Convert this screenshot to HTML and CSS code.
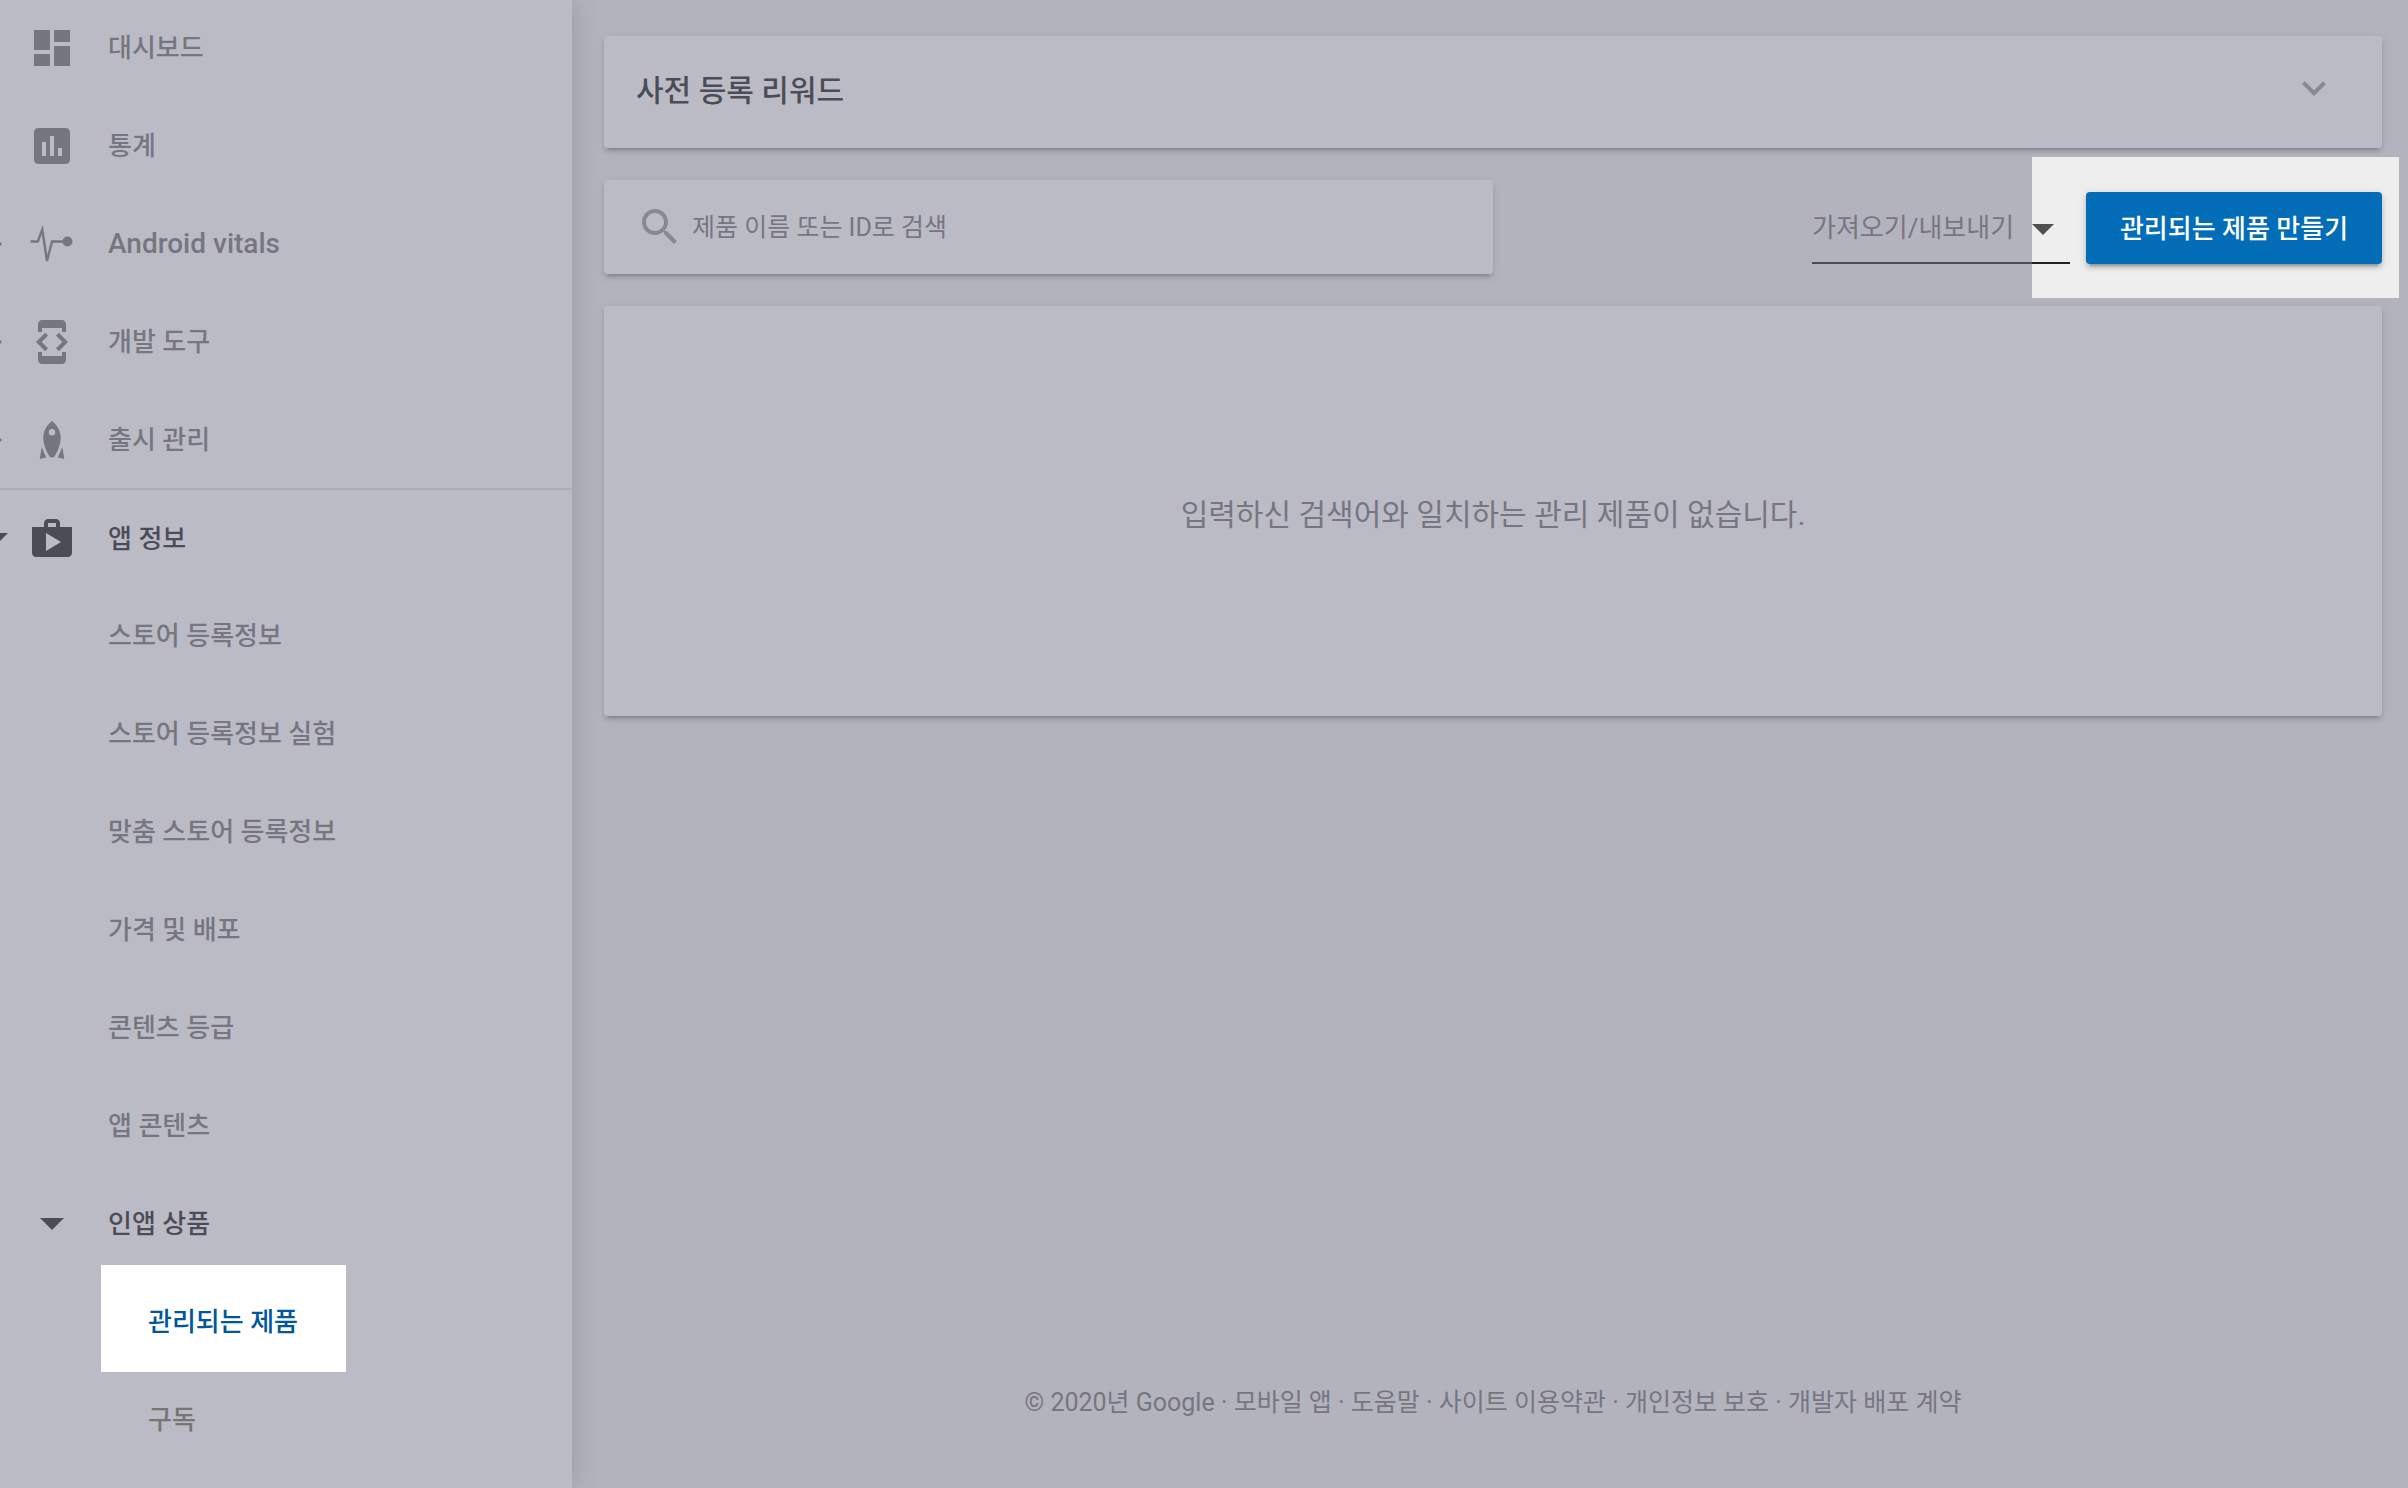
FILE: index.html
```html
<!DOCTYPE html>
<html lang="ko">
<head>
    <meta charset="UTF-8">
    <meta name="viewport" content="width=device-width, initial-scale=1.0">
    <title>관리되는 제품</title>
    <link rel="stylesheet" href="styles.css">
</head>
<body>
    <div class="layout">
        <aside class="sidebar">
            <nav class="menu">
                <a href="#" class="menu-item">
                    <span class="caret"></span>
                    <svg class="icon" viewBox="0 0 24 24"><path d="M3 13h8V3H3v10zm0 8h8v-6H3v6zm10 0h8V11h-8v10zm0-18v6h8V3h-8z"/></svg>
                    <span>대시보드</span>
                </a>
                <a href="#" class="menu-item">
                    <span class="caret"></span>
                    <svg class="icon" viewBox="0 0 24 24"><path d="M19 3H5c-1.1 0-2 .9-2 2v14c0 1.1.9 2 2 2h14c1.1 0 2-.9 2-2V5c0-1.1-.9-2-2-2zM9 17H7v-7h2v7zm4 0h-2V7h2v10zm4 0h-2v-4h2v4z"/></svg>
                    <span>통계</span>
                </a>
                <a href="#" class="menu-item">
                    <svg class="caret" viewBox="0 0 24 24"><path d="M6 0l12 12L6 24z"/></svg>
                    <svg class="icon" viewBox="0 0 48 48">
                        <path class="line" d="M2.5 21.5h7.3L14.3 9.5 19 41l5-19.5h12"/>
                        <circle cx="39.5" cy="21.5" r="5"/>
                    </svg>
                    <span class="latin">Android vitals</span>
                </a>
                <a href="#" class="menu-item">
                    <svg class="caret" viewBox="0 0 24 24"><path d="M6 0l12 12L6 24z"/></svg>
                    <svg class="icon" viewBox="0 0 24 24"><path d="M7 5h10v2h2V3c0-1.1-.9-1.99-2-1.99L7 1c-1.1 0-2 .9-2 2v4h2V5zm8.41 11.59L20 12l-4.59-4.59L14 8.83 17.17 12 14 15.17l1.41 1.42zM10 15.17L6.83 12 10 8.83 8.59 7.41 4 12l4.59 4.59L10 15.17zM17 19H7v-2H5v4c0 1.1.9 2 2 2h10c1.1 0 2-.9 2-2v-4h-2v2z"/></svg>
                    <span>개발 도구</span>
                </a>
                <a href="#" class="menu-item">
                    <svg class="caret" viewBox="0 0 24 24"><path d="M6 0l12 12L6 24z"/></svg>
                    <svg class="icon" viewBox="0 0 48 48">
                        <path fill-rule="evenodd" d="M24 5c5 4 8.700 9.500 8.700 16.500 0 7-3 14-6.200 19-1 1.300-4 1.300-5 0-3.200-5-6.200-12-6.200-19C15.300 14.500 19 9 24 5zm0 8.100a3.200 3.200 0 1 0 0 6.400 3.200 3.200 0 0 0 0-6.400z"/>
                        <path d="M13.700 31l4.500 10.500-6.500 1.500zM34.300 31l-4.500 10.500 6.500 1.500z"/>
                    </svg>
                    <span>출시 관리</span>
                </a>
                <a href="#" class="menu-item divided open">
                    <svg class="caret" viewBox="0 0 24 24"><path d="M0 6h24L12 18z"/></svg>
                    <svg class="icon" viewBox="0 0 24 24"><path d="M16 6V4c0-1.110-.89-2-2-2h-4c-1.110 0-2 .89-2 2v2H2v13c0 1.110.89 2 2 2h16c1.110 0 2-.89 2-2V6h-6zm-6-2h4v2h-4V4zM9 18V9l7.500 4.500L9 18z"/></svg>
                    <span>앱 정보</span>
                </a>
                <a href="#" class="menu-item sub">스토어 등록정보</a>
                <a href="#" class="menu-item sub">스토어 등록정보 실험</a>
                <a href="#" class="menu-item sub">맞춤 스토어 등록정보</a>
                <a href="#" class="menu-item sub">가격 및 배포</a>
                <a href="#" class="menu-item sub">콘텐츠 등급</a>
                <a href="#" class="menu-item sub">앱 콘텐츠</a>
                <a href="#" class="menu-item open">
                    <span class="caret"></span>
                    <svg class="icon" viewBox="0 0 48 48"><path d="M12 18h24L24 30z"/></svg>
                    <span>인앱 상품</span>
                </a>
                <a href="#" class="menu-item leaf selected">
                    관리되는 제품
                    <span class="spotlight spotlight-menu"></span>
                </a>
                <a href="#" class="menu-item leaf">구독</a>
            </nav>
        </aside>

        <main class="content">
            <button type="button" class="card rewards">
                <span>사전 등록 리워드</span>
                <svg class="icon" viewBox="0 0 24 24"><path d="M16.590 8.590L12 13.170 7.410 8.590 6 10l6 6 6-6z"/></svg>
            </button>

            <div class="toolbar">
                <label class="card search">
                    <svg class="icon" viewBox="0 0 24 24"><path d="M15.500 14h-.79l-.28-.27C15.410 12.590 16 11.110 16 9.500 16 5.910 13.090 3 9.500 3S3 5.910 3 9.500 5.910 16 9.500 16c1.610 0 3.090-.59 4.230-1.570l.27.28v.79l5 4.990L20.490 19l-4.990-5zm-6 0C7.010 14 5 11.990 5 9.500S7.010 5 9.500 5 14 7.010 14 9.500 11.990 14 9.500 14z"/></svg>
                    <input type="search" placeholder="제품 이름 또는 ID로 검색" aria-label="제품 이름 또는 ID로 검색">
                </label>
                <div class="actions">
                    <div class="dropdown">
                        <select aria-label="가져오기/내보내기">
                            <option>가져오기/내보내기</option>
                        </select>
                        <svg class="dropdown-arrow" viewBox="0 0 22 11"><path d="M0 0h22L11 11z"/></svg>
                    </div>
                    <div class="create">
                        <button type="button" class="btn">관리되는 제품 만들기</button>
                        <span class="spotlight spotlight-create"></span>
                    </div>
                </div>
            </div>

            <section class="card empty">
                <p>입력하신 검색어와 일치하는 관리 제품이 없습니다.</p>
            </section>

            <footer class="footer">
                © 2020년 Google · <a href="#">모바일 앱</a> · <a href="#">도움말</a> · <a href="#">사이트 이용약관</a> · <a href="#">개인정보 보호</a> · <a href="#">개발자 배포 계약</a>
            </footer>
        </main>
    </div>
</body>
</html>
```
FILE: styles.css
```css
* {
    box-sizing: border-box;
}

body {
    margin: 0;
    font-family: Roboto, "Noto Sans CJK KR", sans-serif;
    font-size: 26px;
    color: #757575;
    background: #eee;
}

a {
    color: inherit;
    text-decoration: none;
}

button, input, select {
    font: inherit;
    color: inherit;
}

.layout {
    display: flex;
    min-height: 100vh;
}

/* Sidebar */
.sidebar {
    position: relative;
    z-index: 1;
    flex: 0 0 572px;
    overflow: hidden;
    background: #fff;
    box-shadow: 0 0 24px rgba(60, 60, 80, 0.22);
}

/* the menu is scrolled a little to the left, which cuts the carets */
.menu {
    margin: -1px 0 0 -20px;
}

.menu-item {
    display: flex;
    align-items: center;
    height: 98px;
    font-weight: 500;
    line-height: 40px;
}

.menu-item.open {
    color: #212121;
}

.menu-item.divided {
    height: 99px;
    margin-top: -1px;
    border-top: 2px solid #e0e0e0;
}

.menu-item.sub {
    padding-left: 128px;
}

.menu-item.leaf {
    position: relative;
    padding-left: 168px;
}

.menu-item.selected {
    color: #01579b;
}

.latin {
    font-size: 28px;
}

.caret {
    width: 24px;
    height: 24px;
    margin: 0 20px 0 4px;
    fill: currentColor;
}

.icon {
    flex: none;
    width: 48px;
    height: 48px;
    fill: currentColor;
}

.menu-item .icon {
    margin-right: 32px;
}

.line {
    fill: none;
    stroke: currentColor;
    stroke-width: 2.4;
}

/* The shadow of a spotlight dims everything round it */
.spotlight {
    position: absolute;
    pointer-events: none;
    box-shadow: 0 0 0 3000px rgba(119, 119, 139, 0.5);
}

.spotlight-menu {
    top: -8px;
    bottom: -1px;
    left: 121px;
    width: 245px;
}

.spotlight-create {
    top: -35px;
    right: -17px;
    bottom: -34px;
    left: -54px;
}

/* Content */
.content {
    flex: 1;
    display: flex;
    flex-direction: column;
    gap: 32px;
    padding: 36px 26px 65px 32px;
    overflow: hidden;
}

.card, .btn {
    border: none;
    border-radius: 4px;
    box-shadow: 0 4px 4px rgba(0, 0, 0, 0.14), 0 6px 2px -4px rgba(0, 0, 0, 0.2), 0 2px 10px rgba(0, 0, 0, 0.12);
}

.card {
    background: #fff;
}

.rewards {
    display: flex;
    justify-content: space-between;
    align-items: center;
    height: 112px;
    padding: 0 44px 8px 32px;
    font-size: 30px;
    font-weight: 500;
    color: #212121;
    cursor: pointer;
}

.rewards .icon, .search .icon {
    fill: #999;
}

.toolbar {
    display: flex;
    justify-content: space-between;
    align-items: center;
}

.search {
    display: flex;
    align-items: center;
    gap: 8px;
    width: 50%;
    height: 94px;
    padding: 0 32px;
}

.search input {
    flex: 1;
    padding: 0;
    border: none;
    outline: none;
    background: none;
    font-size: 25px;
}

.search input::placeholder {
    color: #757575;
}

.actions {
    display: flex;
    gap: 16px;
    padding-top: 2px;
}

.dropdown {
    position: relative;
}

.dropdown select {
    width: 258px;
    height: 72px;
    padding: 2px 0 0;
    border: none;
    border-bottom: 2px solid #212121;
    border-radius: 0;
    background: none;
    appearance: none;
    cursor: pointer;
}

.dropdown-arrow {
    position: absolute;
    top: 32px;
    right: 16px;
    width: 22px;
    height: 11px;
    fill: #505050;
    pointer-events: none;
}

.create {
    position: relative;
}

.btn {
    min-width: 296px;
    height: 72px;
    padding: 0 32px 4px;
    background: #036db7;
    color: #fff;
    font-weight: 500;
    cursor: pointer;
}

.empty {
    display: flex;
    justify-content: center;
    align-items: center;
    height: 410px;
    padding-top: 2px;
    font-size: 30px;
}

.empty p {
    margin: 0;
}

.footer {
    margin-top: auto;
    font-size: 25px;
    line-height: 40px;
    text-align: center;
}
```
